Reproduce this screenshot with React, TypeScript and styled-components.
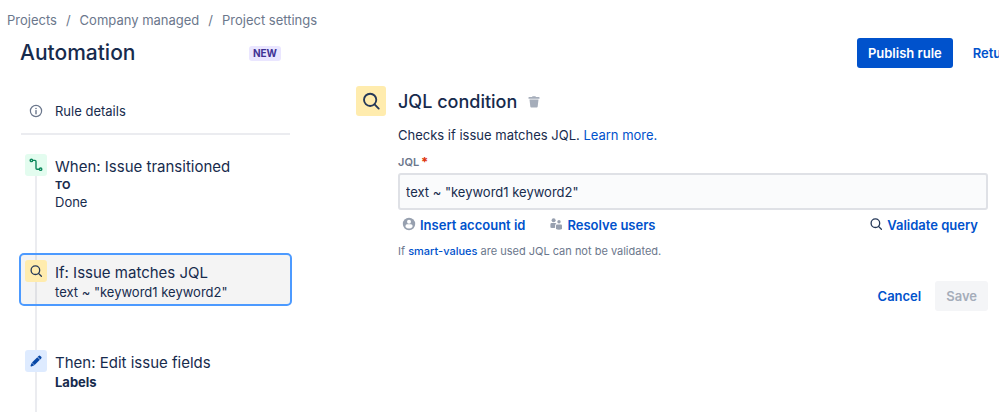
import React from 'react';
import styled, { createGlobalStyle } from 'styled-components';

const color = {
  text: '#172b4d',
  muted: '#6b778c',
  link: '#0052cc',
  line: '#ebecf0',
  yellow: '#ffecae',
};

const GlobalStyle = createGlobalStyle`
  *, *::before, *::after { box-sizing: border-box; }
  html, body { margin: 0; background: #fff; }
  body, button, input {
    font-family: Inter, "Liberation Sans", sans-serif;
  }
  body { color: ${color.text}; font-size: 13px; line-height: 16px; }
`;

const Page = styled.div`
  display: flex;
  flex-direction: column;
  min-height: 100vh;
  overflow: hidden;
`;

const Breadcrumbs = styled.nav`
  padding: 12px 7px 0;

  ol {
    display: flex;
    gap: 9px;
    margin: 0;
    padding: 0;
    list-style: none;
  }
  li {
    display: flex;
    gap: 9px;
    color: ${color.muted};
  }
  li + li::before { content: "/"; }
  a { color: inherit; text-decoration: none; }
`;

const Header = styled.header`
  display: flex;
  align-items: center;
  min-width: 1075px;
  padding: 10px 12px 0 20px;
`;

const HeaderTitle = styled.div`
  display: flex;
  align-items: center;
  justify-content: space-between;
  width: 261px;
  margin-right: auto;
`;

const PageTitle = styled.h1`
  margin: 0;
  font-size: 21px;
  font-weight: 500;
  line-height: 28px;
`;

const Lozenge = styled.span`
  padding: 0 4px;
  border-radius: 3px;
  background: #eae6ff;
  color: #403294;
  font-size: 10px;
  font-weight: 700;
  line-height: 15px;
`;

const Button = styled.button<{ $kind: 'primary' | 'link' | 'disabled' }>`
  height: 30px;
  padding: 0 11px;
  border: 0;
  border-radius: 3px;
  background: ${({ $kind }) =>
    $kind === 'primary' ? '#0052cc' : $kind === 'disabled' ? '#f4f5f7' : 'transparent'};
  color: ${({ $kind }) =>
    $kind === 'primary' ? '#fff' : $kind === 'disabled' ? '#a5adba' : color.link};
  font-size: 13px;
  font-weight: 600;
  white-space: nowrap;
  cursor: ${({ $kind }) => ($kind === 'disabled' ? 'not-allowed' : 'pointer')};
`;

const HeaderActions = styled.div`
  display: flex;
  gap: 9px;
`;

const Columns = styled.div`
  display: flex;
  flex: 1;
`;

const Sidebar = styled.aside`
  display: flex;
  flex-direction: column;
  flex: 0 0 292px;
  padding-left: 19px;
`;

const RuleDetails = styled.a`
  display: flex;
  align-items: center;
  gap: 12px;
  height: 67px;
  margin: 0 2px;
  padding: 20px 8px 0;
  border-bottom: 2px solid ${color.line};
  color: inherit;
  text-decoration: none;
`;

const Steps = styled.ol`
  display: flex;
  flex: 1;
  flex-direction: column;
  gap: 37px;
  margin: 12px 0 0;
  padding: 0 0 12px;
  list-style: none;
  background: linear-gradient(${color.line}, ${color.line}) 16px 16px / 2px 100% no-repeat;
`;

const Step = styled.li<{ $selected?: boolean }>`
  display: flex;
  gap: 8px;
  padding: 5px 4px 3px;
  border: 2px solid ${({ $selected }) => ($selected ? '#4c9aff' : 'transparent')};
  border-radius: 5px;
  background: ${({ $selected }) => ($selected ? 'rgba(9, 9, 9, 0.045)' : 'transparent')};
`;

const IconTile = styled.span<{ $tone: string; $large?: boolean }>`
  display: flex;
  flex: none;
  align-items: center;
  justify-content: center;
  width: ${({ $large }) => ($large ? '30px' : '22px')};
  height: ${({ $large }) => ($large ? '30px' : '22px')};
  border-radius: 3px;
  background: ${({ $tone }) => $tone};
`;

const StepText = styled.div`
  padding-top: 3px;
`;

const StepTitle = styled.div`
  font-size: 15px;
  line-height: 20px;
`;

const StepLine = styled.div<{ $bold?: boolean }>`
  font-weight: ${({ $bold }) => ($bold ? 700 : 400)};
  line-height: 18px;
`;

const StepLabel = styled.div`
  font-size: 11px;
  font-weight: 700;
  line-height: 16px;
`;

const Main = styled.main`
  display: grid;
  flex: 1;
  grid-template-columns: 30px minmax(0, 1fr);
  align-content: start;
  column-gap: 12px;
  padding: 18px 11px 0 64px;
`;

const TitleRow = styled.div`
  display: flex;
  align-items: center;
  gap: 10px;
  padding-top: 2px;
`;

const SectionTitle = styled.h2`
  margin: 0;
  font-size: 18px;
  font-weight: 500;
  line-height: 24px;
`;

const IconButton = styled.button`
  display: flex;
  padding: 0;
  border: 0;
  background: none;
  cursor: pointer;
`;

const Form = styled.form`
  grid-column: 2;
`;

const Description = styled.p`
  margin: 11px 0 0;
`;

const Link = styled.a<{ $strong?: boolean }>`
  color: ${color.link};
  font-weight: ${({ $strong }) => ($strong ? 500 : 400)};
  text-decoration: none;
`;

const FieldLabel = styled.label`
  display: flex;
  gap: 2px;
  margin: 11px 0 3px;
  color: ${color.muted};
  font-size: 11px;
  font-weight: 600;

  span { color: #de350b; font-size: 13px; font-weight: 700; }
`;

const TextField = styled.input`
  display: block;
  width: 100%;
  height: 37px;
  padding: 0 6px;
  border: 2px solid #dfe1e6;
  border-radius: 3px;
  background: #fafbfc;
  color: ${color.text};
  font-size: 13px;
`;

const Helpers = styled.div`
  display: flex;
  gap: 24px;
  padding: 6px 10px 0 4px;
`;

const Helper = styled.button<{ $end?: boolean }>`
  display: flex;
  align-items: center;
  gap: 4px;
  padding: 0;
  margin-left: ${({ $end }) => ($end ? 'auto' : '0')};
  border: 0;
  background: none;
  color: ${color.link};
  font-size: 13px;
  font-weight: 600;
  line-height: 18px;
  cursor: pointer;

  svg { margin-bottom: 2px; }
`;

const Hint = styled.p`
  margin: 9px 0 0;
  color: ${color.muted};
  font-size: 11px;
`;

const FormActions = styled.div`
  display: flex;
  justify-content: flex-end;
  gap: 3px;
  margin-top: 22px;
`;

const SearchIcon = ({ size, weight = 1.3 }: { size: number; weight?: number }) => (
  <svg width={size} height={size} viewBox="0 0 14 14" fill="none" stroke="#253858" strokeWidth={weight} strokeLinecap="round" aria-hidden="true">
    <circle cx="6.4" cy="6.2" r="4.3" />
    <path d="M9.5 9.4 12.4 12.3" />
  </svg>
);

const InfoIcon = () => (
  <svg width="14" height="14" viewBox="0 0 14 14" fill="none" aria-hidden="true">
    <circle cx="7" cy="7" r="5.6" stroke="#6b778c" strokeWidth="1.2" />
    <circle cx="7" cy="4.5" r=".8" fill="#6b778c" />
    <path d="M7 6.6v3.2" stroke="#6b778c" strokeWidth="1.4" strokeLinecap="round" />
  </svg>
);

const TransitionIcon = () => (
  <svg width="14" height="14" viewBox="0 0 14 14" fill="none" stroke="#0b875b" strokeWidth="1.4" aria-hidden="true">
    <circle cx="2.4" cy="2.4" r="1.2" />
    <circle cx="11.6" cy="11.2" r="1.2" />
    <path d="M3.6 2.4H6a1 1 0 0 1 1 1v6.8a1 1 0 0 0 1 1h2.4" />
  </svg>
);

const PencilIcon = () => (
  <svg width="14" height="14" viewBox="0 0 14 14" fill="#0747a6" aria-hidden="true">
    <path d="M8.3 3.2 10.9 5.8 5.6 11.1 3 8.5z" />
    <path d="m8.7 2.8.9-.9a1.200 1.200 0 0 1 1.700 0l.9.9a1.200 1.200 0 0 1 0 1.700l-.9.9z" />
    <path d="M2.800 8.700 5.400 11.300 2.400 12.400a.6.6 0 0 1-.8-.8z" />
  </svg>
);

const TrashIcon = () => (
  <svg width="14" height="14" viewBox="0 0 14 14" fill="#a5adba" aria-hidden="true">
    <path d="M2 2h3l.6-.8h2.800L9 2h3a.5.5 0 0 1 .5.5v1.200h-11V2.500A.5.5 0 0 1 2 2z" />
    <path d="M2.500 4.600h9l-.8 6.900a1 1 0 0 1-1 .9H4.300a1 1 0 0 1-1-.9z" />
  </svg>
);

const PersonIcon = () => (
  <svg width="14" height="14" viewBox="0 0 14 14" aria-hidden="true">
    <circle cx="7" cy="7" r="6.200" fill="#97a0af" />
    <circle cx="7" cy="4.700" r="2" fill="#fff" />
    <path d="M3.500 10V8.800a1.500 1.500 0 0 1 1.500-1.500h4a1.500 1.500 0 0 1 1.500 1.500V10a4.600 4.600 0 0 1-7 0z" fill="#fff" />
  </svg>
);

const PeopleIcon = () => (
  <svg width="14" height="14" viewBox="0 0 14 14" fill="#97a0af" aria-hidden="true">
    <circle cx="4.600" cy="3.200" r="2" />
    <circle cx="10" cy="4.800" r="1.700" />
    <path d="M1.400 10.400V7.400a1.300 1.300 0 0 1 1.300-1.300h3.600c.5 0 .9.3 1.100.700-.8.400-1.300 1.100-1.300 2v1.900c-1.700.500-3.400.400-4.700-.3z" />
    <path d="M7 12V8.700c0-.7.500-1.200 1.200-1.200h3.600c.7 0 1.200.5 1.200 1.200V12c-1.800.9-4.200.9-6 0z" />
  </svg>
);

export default function App() {
  return (
    <Page>
      <GlobalStyle />
      <Breadcrumbs aria-label="Breadcrumb">
        <ol>
          <li><a href="#projects">Projects</a></li>
          <li><a href="#company">Company managed</a></li>
          <li><a href="#settings">Project settings</a></li>
        </ol>
      </Breadcrumbs>
      <Header>
        <HeaderTitle>
          <PageTitle>Automation</PageTitle>
          <Lozenge>NEW</Lozenge>
        </HeaderTitle>
        <HeaderActions>
          <Button type="button" $kind="primary">Publish rule</Button>
          <Button type="button" $kind="link">Return to list</Button>
        </HeaderActions>
      </Header>
      <Columns>
        <Sidebar>
          <RuleDetails href="#details"><InfoIcon />Rule details</RuleDetails>
          <Steps>
            <Step>
              <IconTile $tone="#e3fcef"><TransitionIcon /></IconTile>
              <StepText>
                <StepTitle>When: Issue transitioned</StepTitle>
                <StepLabel>TO</StepLabel>
                <StepLine>Done</StepLine>
              </StepText>
            </Step>
            <Step $selected>
              <IconTile $tone={color.yellow}><SearchIcon size={14} /></IconTile>
              <StepText>
                <StepTitle>If: Issue matches JQL</StepTitle>
                <StepLine>text ~ "keyword1 keyword2"</StepLine>
              </StepText>
            </Step>
            <Step>
              <IconTile $tone="#deebff"><PencilIcon /></IconTile>
              <StepText>
                <StepTitle>Then: Edit issue fields</StepTitle>
                <StepLine $bold>Labels</StepLine>
              </StepText>
            </Step>
          </Steps>
        </Sidebar>
        <Main>
          <IconTile $large $tone={color.yellow}><SearchIcon size={20} /></IconTile>
          <TitleRow>
            <SectionTitle>JQL condition</SectionTitle>
            <IconButton type="button" aria-label="Delete condition"><TrashIcon /></IconButton>
          </TitleRow>
          <Form onSubmit={(event) => event.preventDefault()}>
            <Description>
              Checks if issue matches JQL. <Link href="#learn">Learn more.</Link>
            </Description>
            <FieldLabel htmlFor="jql">JQL<span>*</span></FieldLabel>
            <TextField id="jql" type="text" defaultValue={'text ~ "keyword1 keyword2"'} />
            <Helpers>
              <Helper type="button"><PersonIcon />Insert account id</Helper>
              <Helper type="button"><PeopleIcon />Resolve users</Helper>
              <Helper type="button" $end><SearchIcon size={14} />Validate query</Helper>
            </Helpers>
            <Hint>
              If <Link $strong href="#smart-values">smart-values</Link> are used JQL can not be validated.
            </Hint>
            <FormActions>
              <Button type="button" $kind="link">Cancel</Button>
              <Button type="submit" $kind="disabled" disabled>Save</Button>
            </FormActions>
          </Form>
        </Main>
      </Columns>
    </Page>
  );
}
